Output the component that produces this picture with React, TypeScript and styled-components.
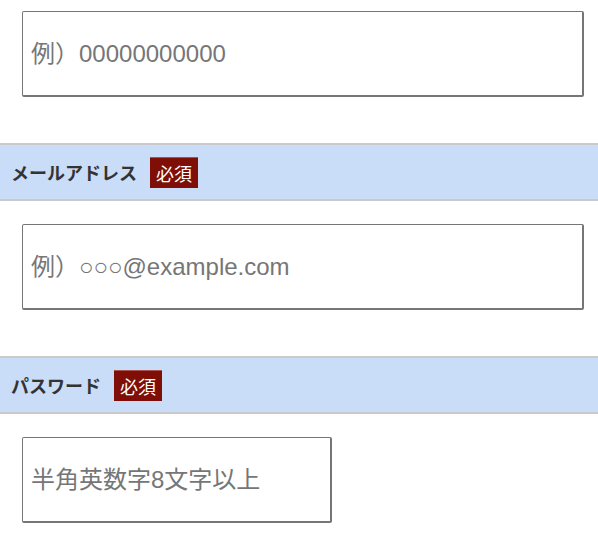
import styled, { createGlobalStyle } from 'styled-components'

const GlobalStyle = createGlobalStyle`
  body {
    margin: 0;
    background: #fff;
    font-family: 'Liberation Sans', 'Noto Sans CJK JP', sans-serif;
  }
`

type FieldProps = { $first?: boolean; $narrow?: boolean }

export default function App() {
  return (
    <>
      <GlobalStyle />
      <Form>
        <FieldRow $first>
          <TextInput type="tel" placeholder="例）00000000000" />
        </FieldRow>

        <SectionHeader>
          <Label>メールアドレス</Label>
          <Required>必須</Required>
        </SectionHeader>
        <FieldRow>
          <TextInput type="email" placeholder="例）○○○@example.com" />
        </FieldRow>

        <SectionHeader>
          <Label>パスワード</Label>
          <Required>必須</Required>
        </SectionHeader>
        <FieldRow>
          <TextInput $narrow type="password" placeholder="半角英数字8文字以上" />
        </FieldRow>
      </Form>
    </>
  )
}

const Form = styled.form`
  display: flex;
  flex-direction: column;
  width: 598px;
`

const FieldRow = styled.div<FieldProps>`
  display: flex;
  padding: ${({ $first }) => ($first ? '11px' : '23px')} 14px 46px 22px;
`

const TextInput = styled.input<FieldProps>`
  box-sizing: border-box;
  width: ${({ $narrow }) => ($narrow ? '310px' : '562px')};
  height: 86px;
  padding: 0 8px;
  border: solid #767676;
  border-width: 1px 2px 2px 1px;
  border-radius: 2px;
  background: #fff;
  font-family: 'Liberation Sans', 'Noto Sans CJK JP', sans-serif;
  font-size: 24px;
  color: #333;
  outline: none;

  &::placeholder {
    color: #767676;
  }
`

const SectionHeader = styled.div`
  display: flex;
  align-items: center;
  gap: 13px;
  height: 58px;
  box-sizing: border-box;
  padding: 0 11px;
  background: #c9dcf8;
  border-top: 2px solid #cacaca;
  border-bottom: 2px solid #cacaca;
`

const Label = styled.span`
  font-family: 'Noto Sans CJK JP', sans-serif;
  font-size: 18px;
  font-weight: 700;
  color: #333;
`

const Required = styled.span`
  display: flex;
  align-items: center;
  height: 31px;
  padding: 0 6px;
  background: #7e0e06;
  border-top: 1px solid #a8534d;
  box-sizing: border-box;
  font-family: 'Noto Sans CJK JP', sans-serif;
  font-size: 18px;
  color: #fff;
`
